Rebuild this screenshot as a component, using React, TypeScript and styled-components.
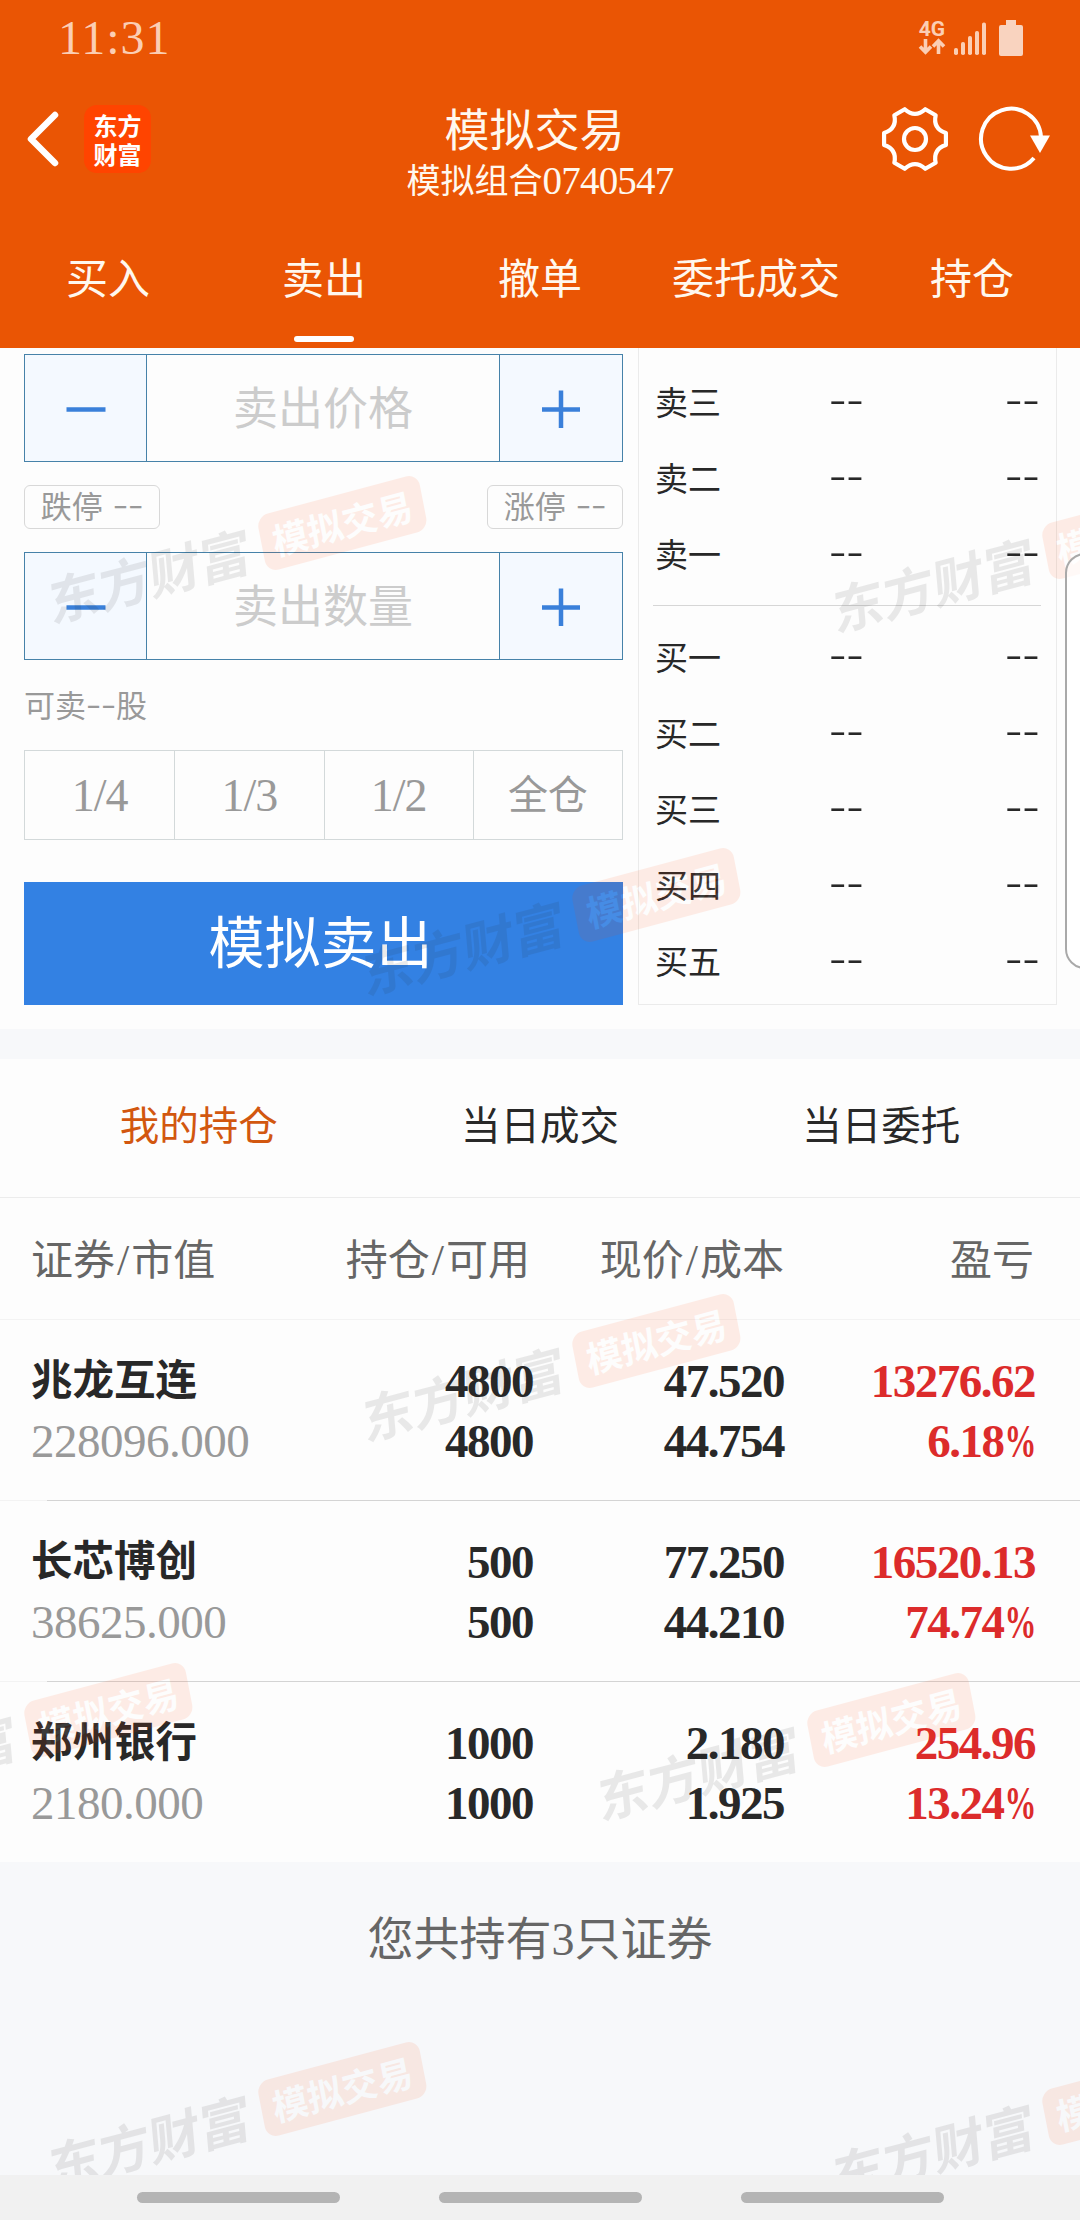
import React from "react";
import styled, { createGlobalStyle } from "styled-components";

const GlobalStyle = createGlobalStyle`
  * { box-sizing: border-box; }
  body {
    margin: 0;
    background: #fdfdfd;
    font-family: "Liberation Serif", "Noto Sans CJK SC", serif;
    font-weight: 400;
    color: #282828;
  }
`;

const Screen = styled.div`
  position: relative;
  width: 1080px;
  height: 2220px;
  overflow: hidden;
  display: flex;
  flex-direction: column;
  background: #fdfdfd;
  white-space: nowrap;
`;

/* ---------- header ---------- */

const Header = styled.header`
  height: 348px;
  flex: none;
  background: #ea5504;
  color: #fff8ee;
  display: flex;
  flex-direction: column;
`;

const StatusBar = styled.div`
  height: 78px;
  display: flex;
  align-items: center;
  justify-content: space-between;
  padding: 0 57px 2px 58px;
  color: #fbceb4;
`;

const Clock = styled.span`
  font-size: 48px;
  line-height: 48px;
  letter-spacing: 1px;
`;

const StatusIcons = styled.div`
  display: flex;
  align-items: flex-end;
`;

const Network = styled.div`
  width: 28px;
  margin-right: 7px;
  display: flex;
  flex-direction: column;
  align-items: center;
  font: 700 21px/18px Roboto, sans-serif;
`;

const TitleBar = styled.div`
  height: 133px;
  display: grid;
  grid-template-columns: 300px 1fr 300px;
`;

const TitleLeft = styled.div`
  display: flex;
  align-items: center;
  gap: 24px;
  padding: 0 0 11px 26px;
`;

const TitleRight = styled.div`
  display: flex;
  align-items: center;
  justify-content: flex-end;
  gap: 29px;
  padding: 0 29px 11px 0;
`;

const Logo = styled.div`
  width: 67px;
  height: 68px;
  border-radius: 13px;
  background: #ff4400;
  display: flex;
  flex-direction: column;
  align-items: center;
  justify-content: center;
  padding-bottom: 1px;
  color: #fff;
  font: 700 24px/29px "Noto Sans CJK SC", sans-serif;
`;

const TitleText = styled.div`
  display: flex;
  flex-direction: column;
  align-items: center;
  padding: 26px 10px 0 0;
`;

const Title = styled.div`
  font-size: 45px;
  line-height: 56px;
  padding-right: 1px;
`;

const Subtitle = styled.div`
  font-size: 34px;
  line-height: 42px;
  display: flex;
  align-items: center;
  padding-left: 10px;
`;

const AccountNo = styled.span`
  font-size: 39px;
  letter-spacing: -0.8px;
  padding-bottom: 2px;
`;

const NavTabs = styled.nav`
  flex: 1;
  display: grid;
  grid-template-columns: repeat(5, 1fr);
`;

const NavTab = styled.div<{ $active?: boolean }>`
  display: flex;
  flex-direction: column;
  align-items: center;
  justify-content: flex-end;
  gap: 28px;
  padding-bottom: 6px;
  font-size: 42px;
  line-height: 56px;
  &::after {
    content: "";
    width: 60px;
    height: 6px;
    border-radius: 3px;
    background: ${(p) => (p.$active ? "#fff" : "transparent")};
  }
`;

/* ---------- order form ---------- */

const Trade = styled.section`
  height: 681px;
  flex: none;
  display: flex;
  gap: 15px;
  padding: 0 23px 24px 24px;
`;

const Form = styled.div`
  width: 599px;
  display: flex;
  flex-direction: column;
  padding-top: 6px;
`;

const Stepper = styled.div`
  height: 108px;
  display: grid;
  grid-template-columns: 122px 1fr 123px;
  border: 1px solid #4682a9;
`;

const StepButton = styled.div<{ $side: "left" | "right" }>`
  display: flex;
  align-items: center;
  justify-content: center;
  background: #f4f9ff;
  border-${(p) => (p.$side === "left" ? "right" : "left")}: 1px solid #4682a9;
`;

const Placeholder = styled.div`
  display: flex;
  align-items: center;
  justify-content: center;
  padding-top: 4px;
  font-size: 45px;
  line-height: 60px;
  color: #cccccc;
`;

const Limits = styled.div`
  height: 90px;
  display: flex;
  align-items: center;
  justify-content: space-between;
`;

const Limit = styled.div`
  width: 136px;
  height: 44px;
  border: 1px solid #d8d8d8;
  border-radius: 6px;
  display: flex;
  align-items: center;
  justify-content: center;
  gap: 10px;
  padding-top: 2px;
  font-size: 31px;
  line-height: 40px;
  color: #999;
`;

const Available = styled.div`
  height: 90px;
  display: flex;
  align-items: center;
  padding-top: 4px;
  font-size: 31px;
  line-height: 40px;
  color: #999;
`;

const Dashes = styled.span<{ $size: number }>`
  font-family: "Noto Sans CJK SC", sans-serif;
  font-weight: 300;
  font-size: ${(p) => p.$size}px;
  line-height: 40px;
  padding-bottom: ${(p) => Math.round(p.$size * 0.34)}px;
`;

const Portions = styled.div`
  height: 90px;
  display: grid;
  grid-template-columns: repeat(4, 1fr);
  border: 1px solid #d3d9da;
`;

const Portion = styled.div<{ $cjk?: boolean }>`
  display: flex;
  align-items: center;
  justify-content: center;
  padding-top: 2px;
  color: #999;
  font-size: ${(p) => (p.$cjk ? 40 : 46)}px;
  line-height: 60px;
  letter-spacing: ${(p) => (p.$cjk ? 0 : -1)}px;
  & + & {
    border-left: 1px solid #d3d9da;
  }
`;

const SellButton = styled.div`
  height: 123px;
  margin-top: 42px;
  background: #3381e3;
  color: #fff;
  display: flex;
  align-items: center;
  justify-content: center;
  padding-right: 6px;
  font-size: 56px;
  line-height: 70px;
`;

const Book = styled.div`
  width: 419px;
  border: 1px solid #ebebeb;
  border-top: 0;
  padding: 17px 15px 0 14px;
`;

const BookRow = styled.div`
  height: 76px;
  display: grid;
  grid-template-columns: 174px 1fr 36px;
  align-items: center;
  padding: 2px 0 0 2px;
  font-size: 33px;
  line-height: 44px;
`;

const BookDivider = styled.div`
  height: 1px;
  margin: 12px 0 14px;
  background: #d6d6d6;
`;

const Band = styled.div`
  height: 30px;
  flex: none;
  background: #f7f8fa;
`;

/* ---------- holdings ---------- */

const ListTabs = styled.div`
  height: 139px;
  flex: none;
  display: grid;
  grid-template-columns: repeat(3, 1fr);
  padding: 0 28px 2px;
  border-bottom: 1px solid #ececec;
`;

const ListTab = styled.div<{ $active?: boolean }>`
  display: flex;
  align-items: center;
  justify-content: center;
  font-size: 39.5px;
  line-height: 50px;
  color: ${(p) => (p.$active ? "#d2570f" : "#282828")};
`;

const HeadRow = styled.div`
  height: 122px;
  flex: none;
  display: grid;
  grid-template-columns: 281px 218px 254px 1fr;
  align-items: center;
  padding: 5px 46px 0 31px;
  border-bottom: 1px solid #f3f3f3;
  font-size: 42px;
  line-height: 56px;
  color: #666;
`;

const HeadCell = styled.div<{ $right?: boolean }>`
  text-align: ${(p) => (p.$right ? "right" : "left")};
`;

const Slash = styled.span`
  padding: 0 2px;
  font-size: 44px;
`;

const Row = styled.div`
  height: 181px;
  flex: none;
  display: grid;
  grid-template-columns: 282px 220px 251px 1fr;
  padding: 31px 45px 0 31px;
  &:first-child {
    height: 180px;
  }
  & + & {
    border-top: 1px solid transparent;
    border-image: linear-gradient(to right, #f3f3f3 48px, #d4d4d4 48px) 1;
  }
`;

const Holdings = styled.div`
  flex: none;
  display: flex;
  flex-direction: column;
`;

const Pair = styled.div<{ $red?: boolean }>`
  display: flex;
  flex-direction: column;
  align-items: flex-end;
  font-size: 47px;
  font-weight: 700;
  line-height: 60px;
  letter-spacing: -1.5px;
  color: ${(p) => (p.$red ? "#dc2b2b" : "#282828")};
`;

const Percent = styled.span`
  display: inline-block;
  margin-left: -14px;
  transform: scaleX(0.68);
  transform-origin: right center;
`;

const NameCell = styled.div`
  display: flex;
  flex-direction: column;
  line-height: 60px;
`;

const Name = styled.span`
  font-size: 41.5px;
  font-weight: 700;
`;

const MarketValue = styled.span`
  font-size: 47px;
  letter-spacing: -0.5px;
  color: #999;
`;

const Footer = styled.div`
  flex: 1;
  background: #f7f8fa;
  color: #666;
  display: flex;
  justify-content: center;
  padding-top: 48px;
  font-size: 46px;
  line-height: 60px;
`;

const SystemNav = styled.div`
  position: relative;
  z-index: 2;
  height: 45px;
  flex: none;
  background: #f1f1f1;
  display: flex;
  justify-content: center;
  gap: 99px;
  padding-top: 17px;
`;

const Pill = styled.div`
  width: 203px;
  height: 11px;
  border-radius: 6px;
  background: #b4b4b4;
`;

/* ---------- overlays ---------- */

const EdgeHandle = styled.div`
  position: absolute;
  left: 1065px;
  top: 553px;
  width: 40px;
  height: 416px;
  border: 2px solid #a9a9a9;
  border-radius: 20px;
  background: rgba(255, 255, 255, 0.7);
`;

const Watermark = styled.div<{ $x: number; $y: number }>`
  position: absolute;
  left: ${(p) => p.$x}px;
  top: ${(p) => p.$y}px;
  display: flex;
  align-items: center;
  gap: 12px;
  transform: translate(-50%, -50%) rotate(-15deg) skewX(-4deg);
  opacity: 0.09;
  pointer-events: none;
  font-family: "Noto Sans CJK SC", sans-serif;
`;

const MarkName = styled.span`
  font-size: 52px;
  line-height: 60px;
  font-weight: 700;
  color: #222;
  transform: skewX(-6deg);
`;

const MarkBadge = styled.span`
  width: 167px;
  height: 57px;
  border-radius: 12px;
  background: #ff4400;
  color: #fff;
  display: flex;
  align-items: center;
  justify-content: center;
  padding-bottom: 2px;
  font-size: 36px;
  line-height: 40px;
  font-weight: 700;
`;

/* ---------- icons ---------- */

const gearPath = () => {
  const at = (r: number, deg: number) => {
    const a = (deg * Math.PI) / 180;
    return `${(34 + r * Math.cos(a)).toFixed(2)} ${(34 + r * Math.sin(a)).toFixed(2)}`;
  };
  let d = "";
  for (let k = 0; k < 6; k++) {
    const c = k * 60;
    d += `${k === 0 ? "M" : "L"}${at(31.5, c - 11)} L${at(31.5, c + 11)} Q${at(20.5, c + 30)} ${at(31.5, c + 49)} `;
  }
  return d + "Z";
};

const BackIcon = () => (
  <svg width="34" height="58" viewBox="0 0 34 58" fill="none" stroke="#fff" strokeWidth="6.5" strokeLinecap="round" strokeLinejoin="round">
    <path d="M29 5 L5 29 L29 53" />
  </svg>
);

const GearIcon = () => (
  <svg width="68" height="68" viewBox="0 0 68 68" fill="none" stroke="#fff" strokeWidth="4.2" strokeLinejoin="round">
    <path d={gearPath()} />
    <circle cx="34" cy="34" r="11" />
  </svg>
);

const RefreshIcon = () => (
  <svg width="73" height="68" viewBox="0 0 73 68" fill="none">
    <path d="M63 32 A30 30 0 1 0 56 53" stroke="#fff" strokeWidth="4" />
    <path d="M52 30.5 H72 L62 48 Z" fill="#fff" />
  </svg>
);

const DataArrows = () => (
  <svg width="28" height="18" viewBox="0 0 28 18" fill="none" stroke="#fbceb4" strokeWidth="3.6">
    <path d="M7.5 1 V13 M2 8.5 L7.5 14.2 L13 8.5" />
    <path d="M20.5 16 V4 M15 8.5 L20.5 2.8 L26 8.5" />
  </svg>
);

const SignalIcon = () => (
  <svg width="34" height="36" viewBox="0 0 34 36" fill="#fbceb4">
    <rect x="1" y="28" width="4" height="7" rx="1.8" />
    <rect x="8" y="22" width="4" height="13" rx="1.8" />
    <rect x="15" y="16" width="4" height="19" rx="1.8" />
    <rect x="22" y="11" width="4" height="24" rx="1.8" />
    <rect x="29" y="2.500" width="4" height="32.500" rx="1.8" />
  </svg>
);

const BatteryIcon = () => (
  <svg width="36" height="36" viewBox="0 0 36 36" fill="#f9d3bf">
    <path d="M19 0 H29 V5 H34 Q36 5 36 7 V34 Q36 36 34 36 H14 Q12 36 12 34 V7 Q12 5 14 5 H19 Z" />
  </svg>
);

const MinusIcon = () => (
  <svg width="40" height="40" viewBox="0 0 40 40" stroke="#3a80da" strokeWidth="4.5">
    <path d="M0.500 21.500 H39.500" />
  </svg>
);

const PlusIcon = () => (
  <svg width="40" height="40" viewBox="0 0 40 40" stroke="#3a80da" strokeWidth="4.5">
    <path d="M1 21.500 H39 M20 2.500 V40" />
  </svg>
);

/* ---------- data ---------- */

const navTabs = ["买入", "卖出", "撤单", "委托成交", "持仓"];
const asks = ["卖三", "卖二", "卖一"];
const bids = ["买一", "买二", "买三", "买四", "买五"];
const holdings = [
  { name: "兆龙互连", value: "228096.000", qty: ["4800", "4800"], price: ["47.520", "44.754"], profit: "13276.62", rate: "6.18" },
  { name: "长芯博创", value: "38625.000", qty: ["500", "500"], price: ["77.250", "44.210"], profit: "16520.13", rate: "74.74" },
  { name: "郑州银行", value: "2180.000", qty: ["1000", "1000"], price: ["2.180", "1.925"], profit: "254.96", rate: "13.24" },
];
const watermarks = [
  [236, 551],
  [1020, 560],
  [550, 923],
  [550, 1369],
  [2, 1738],
  [785, 1748],
  [236, 2117],
  [1020, 2126],
];

const Quantity = ({ label }: { label: string }) => (
  <Stepper>
    <StepButton $side="left"><MinusIcon /></StepButton>
    <Placeholder>{label}</Placeholder>
    <StepButton $side="right"><PlusIcon /></StepButton>
  </Stepper>
);

const Quote = ({ label }: { label: string }) => (
  <BookRow>
    <span>{label}</span>
    <Dashes $size={52}>--</Dashes>
    <Dashes $size={52}>--</Dashes>
  </BookRow>
);

export default function App() {
  return (
    <Screen>
      <GlobalStyle />
      <Header>
        <StatusBar>
          <Clock>11:31</Clock>
          <StatusIcons>
            <Network>
              <span>4G</span>
              <DataArrows />
            </Network>
            <SignalIcon />
            <BatteryIcon />
          </StatusIcons>
        </StatusBar>
        <TitleBar>
          <TitleLeft>
            <BackIcon />
            <Logo>
              <span>东方</span>
              <span>财富</span>
            </Logo>
          </TitleLeft>
          <TitleText>
            <Title>模拟交易</Title>
            <Subtitle>
              模拟组合<AccountNo>0740547</AccountNo>
            </Subtitle>
          </TitleText>
          <TitleRight>
            <GearIcon />
            <RefreshIcon />
          </TitleRight>
        </TitleBar>
        <NavTabs>
          {navTabs.map((t) => (
            <NavTab key={t} $active={t === "卖出"}>{t}</NavTab>
          ))}
        </NavTabs>
      </Header>

      <Trade>
        <Form>
          <Quantity label="卖出价格" />
          <Limits>
            <Limit>跌停<Dashes $size={46}>--</Dashes></Limit>
            <Limit>涨停<Dashes $size={46}>--</Dashes></Limit>
          </Limits>
          <Quantity label="卖出数量" />
          <Available>可卖<Dashes $size={45}>--</Dashes>股</Available>
          <Portions>
            <Portion>1/4</Portion>
            <Portion>1/3</Portion>
            <Portion>1/2</Portion>
            <Portion $cjk>全仓</Portion>
          </Portions>
          <SellButton>模拟卖出</SellButton>
        </Form>
        <Book>
          {asks.map((l) => <Quote key={l} label={l} />)}
          <BookDivider />
          {bids.map((l) => <Quote key={l} label={l} />)}
        </Book>
      </Trade>
      <Band />

      <ListTabs>
        <ListTab $active>我的持仓</ListTab>
        <ListTab>当日成交</ListTab>
        <ListTab>当日委托</ListTab>
      </ListTabs>
      <HeadRow>
        <HeadCell>证券<Slash>/</Slash>市值</HeadCell>
        <HeadCell $right>持仓<Slash>/</Slash>可用</HeadCell>
        <HeadCell $right>现价<Slash>/</Slash>成本</HeadCell>
        <HeadCell $right>盈亏</HeadCell>
      </HeadRow>
      <Holdings>
        {holdings.map((h) => (
          <Row key={h.name}>
            <NameCell>
              <Name>{h.name}</Name>
              <MarketValue>{h.value}</MarketValue>
            </NameCell>
            <Pair>{h.qty.map((v, i) => <span key={i}>{v}</span>)}</Pair>
            <Pair>{h.price.map((v, i) => <span key={i}>{v}</span>)}</Pair>
            <Pair $red>
              <span>{h.profit}</span>
              <span>{h.rate}<Percent>%</Percent></span>
            </Pair>
          </Row>
        ))}
      </Holdings>
      <Footer>您共持有3只证券</Footer>

      {watermarks.map(([x, y]) => (
        <Watermark key={`${x}-${y}`} $x={x} $y={y}>
          <MarkName>东方财富</MarkName>
          <MarkBadge>模拟交易</MarkBadge>
        </Watermark>
      ))}
      <EdgeHandle />

      <SystemNav>
        <Pill />
        <Pill />
        <Pill />
      </SystemNav>
    </Screen>
  );
}
